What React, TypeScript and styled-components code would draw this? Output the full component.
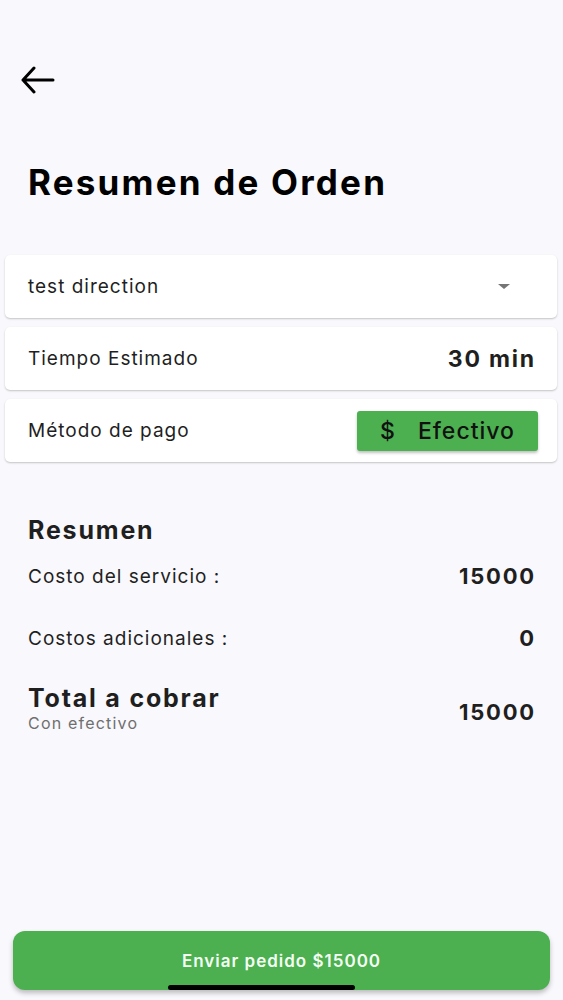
import styled, {createGlobalStyle} from "styled-components";

const GlobalStyle = createGlobalStyle`
  html, body {
    margin: 0;
    padding: 0;
    background: #f9f8fc;
  }
  body {
    font-family: Inter, "Liberation Sans", Arial, sans-serif;
    color: #1c1b1f;
  }
`;

type Line = {
    label: string,
    value: string
}

const lines: Line[] = [
    {label: "Costo del servicio :", value: "15000"},
    {label: "Costos adicionales :", value: "0"},
];

function App() {
    return (
        <Page>
            <GlobalStyle/>
            <Header>
                <BackButton aria-label="Volver">
                    <svg width="36" height="28" viewBox="0 0 36 28" fill="none" stroke="#000"
                         strokeWidth="3" strokeLinecap="round" strokeLinejoin="round">
                        <path d="M33 14H3M14 2L3 14l11 12"/>
                    </svg>
                </BackButton>
            </Header>

            <Title>Resumen de Orden</Title>

            <Cards>
                <Card>
                    <Label>test direction</Label>
                    <Caret/>
                </Card>
                <Card>
                    <Label>Tiempo Estimado</Label>
                    <Value $size={23}>30 min</Value>
                </Card>
                <Card>
                    <Label>Método de pago</Label>
                    <PayButton>
                        <span>$</span>
                        <span>Efectivo</span>
                    </PayButton>
                </Card>
            </Cards>

            <Summary>
                <SectionTitle>Resumen</SectionTitle>
                {lines.map(line => (
                    <Row key={line.label}>
                        <Label>{line.label}</Label>
                        <Value $size={22}>{line.value}</Value>
                    </Row>
                ))}
                <TotalRow>
                    <div>
                        <SectionTitle>Total a cobrar</SectionTitle>
                        <Sub>Con efectivo</Sub>
                    </div>
                    <TotalValue>15000</TotalValue>
                </TotalRow>
            </Summary>

            <Footer>
                <SendButton>Enviar pedido $15000</SendButton>
                <HomeBar/>
            </Footer>
        </Page>
    )
}

const Page = styled.div`
  min-height: 1000px;
  box-sizing: border-box;
  display: flex;
  flex-direction: column;
  padding-bottom: 10px;
`;

const Header = styled.div`
  height: 122px;
  padding: 66px 0 0 20px;
  box-sizing: border-box;
`;

const BackButton = styled.button`
  border: none;
  background: transparent;
  padding: 0;
  display: block;
  cursor: pointer;
`;

const Title = styled.h1`
  margin: 40px 0 0 28px;
  font-size: 35px;
  line-height: 40px;
  font-weight: 700;
  letter-spacing: 2.2px;
  color: #000;
`;

const Cards = styled.div`
  display: flex;
  flex-direction: column;
  gap: 9px;
  margin: 53px 6px 0 5px;
`;

const Card = styled.div`
  height: 63px;
  background: #fff;
  border-radius: 5px;
  box-shadow: 0 1px 2px rgba(0, 0, 0, 0.22);
  display: flex;
  align-items: center;
  justify-content: space-between;
  padding: 0 21px 0 23px;
`;

const Label = styled.span`
  font-size: 19px;
  letter-spacing: 1px;
  color: #1f1f1f;
`;

const Value = styled.span<{ $size: number }>`
  font-size: ${p => p.$size}px;
  font-weight: 700;
  letter-spacing: 1.8px;
  color: #1f1f1f;
`;

const TotalValue = styled(Value).attrs({$size: 22})`
  margin-top: 8px;
`;

const Caret = styled.span`
  width: 0;
  height: 0;
  margin-right: 26px;
  border-left: 6px solid transparent;
  border-right: 6px solid transparent;
  border-top: 5px solid #757575;
`;

const PayButton = styled.div`
  width: 181px;
  height: 40px;
  margin-right: -2px;
  box-sizing: border-box;
  background: #4caf50;
  border-radius: 3px;
  box-shadow: 0 2px 3px rgba(0, 0, 0, 0.25);
  display: flex;
  align-items: center;
  justify-content: center;
  gap: 22px;
  font-size: 23px;
  font-weight: 500;
  letter-spacing: 1px;
  color: #111;
`;

const Summary = styled.div`
  padding: 0 27px 0 28px;
  margin-top: 53px;
`;

const SectionTitle = styled.h2`
  margin: 0;
  font-size: 25px;
  line-height: 30px;
  font-weight: 700;
  letter-spacing: 1.8px;
  color: #1f1f1f;
`;

const Row = styled.div`
  display: flex;
  align-items: center;
  justify-content: space-between;
  height: 62px;
`;

const TotalRow = styled.div`
  display: flex;
  align-items: center;
  justify-content: space-between;
  margin-top: 14px;
`;

const Sub = styled.div`
  font-size: 16px;
  letter-spacing: 1.2px;
  color: #6f6f6f;
`;

const Footer = styled.div`
  margin-top: auto;
  padding: 0 13px;
  position: relative;
`;

const SendButton = styled.button`
  width: 100%;
  height: 59px;
  border: none;
  border-radius: 12px;
  background: #4caf50;
  box-shadow: 0 3px 5px rgba(0, 0, 0, 0.25);
  color: #f4fff4;
  font-family: Inter, "Liberation Sans", Arial, sans-serif;
  font-size: 17px;
  font-weight: 600;
  letter-spacing: 1px;
  cursor: pointer;
`;

const HomeBar = styled.div`
  position: absolute;
  left: 168px;
  bottom: 0;
  width: 187px;
  height: 5px;
  border-radius: 3px;
  background: #000;
`;

export default App;
